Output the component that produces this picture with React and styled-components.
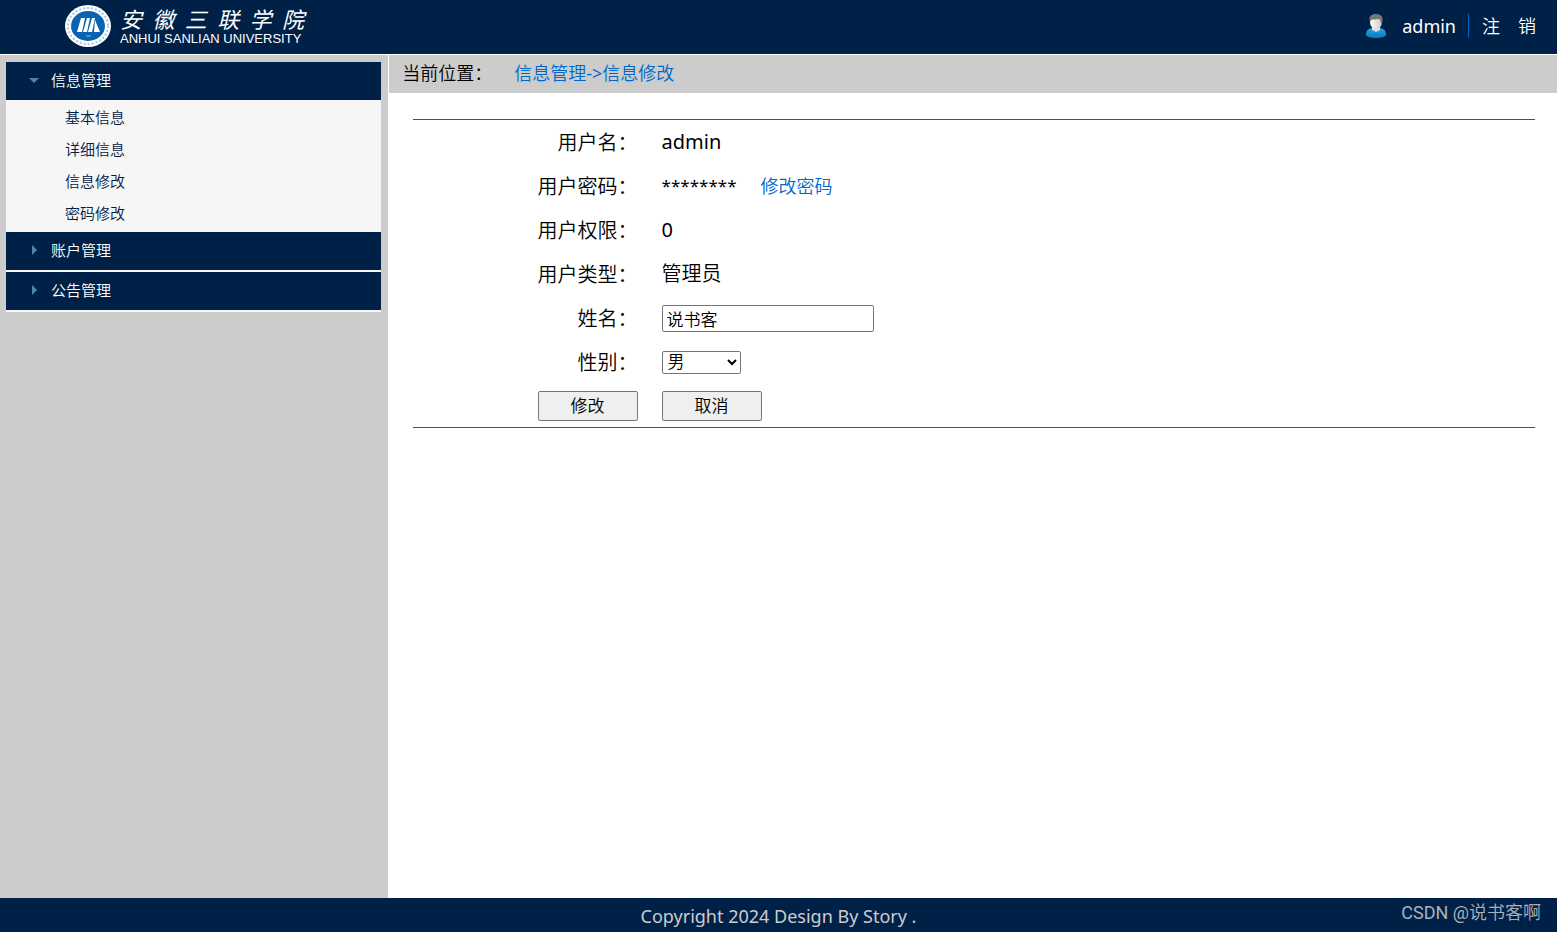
import React, { useState } from 'react';
import styled, { createGlobalStyle } from 'styled-components';

const GlobalStyle = createGlobalStyle`
  * {
    box-sizing: border-box;
  }

  body {
    margin: 0;
    background: #fff;
    color: #000;
    font-family: 'Noto Sans', 'Noto Sans CJK SC DemiLight', 'Noto Sans CJK SC Light', 'Noto Sans CJK SC', sans-serif;
    font-weight: 400;
  }

  a {
    color: #0066cc;
    text-decoration: none;
  }
`;

const MENUS = [
  { title: '信息管理', items: ['基本信息', '详细信息', '信息修改', '密码修改'] },
  { title: '账户管理', items: [] },
  { title: '公告管理', items: [] },
];

const Emblem = () => (
  <svg width='48' height='44' viewBox='0 0 48 44' aria-hidden='true'>
    <ellipse cx='24' cy='22' rx='23' ry='21' fill='#fff' />
    <ellipse cx='24' cy='22' rx='20' ry='18' fill='none' stroke='#a9c6e2' strokeWidth='2' strokeDasharray='2 2' />
    <ellipse cx='24' cy='22' rx='17' ry='15' fill='#0b62b0' />
    <path d='M17 14h4l-3 14h-5zM23 14h3l-3 14h-4zM28 14h3l-3 14h-4zM31 16l5 12h-6z' fill='#fff' />
    <path d='M22 32h5' stroke='#8fb6dc' />
  </svg>
);

const UserIcon = () => (
  <svg width='20' height='26' viewBox='0 0 20 26' aria-hidden='true'>
    <defs>
      <linearGradient id='shirt' x1='0' y1='0' x2='0' y2='1'>
        <stop offset='0' stopColor='#2ba4e0' />
        <stop offset='1' stopColor='#0a78bd' />
      </linearGradient>
      <linearGradient id='face' x1='0' y1='0' x2='1' y2='0'>
        <stop offset='0' stopColor='#fff' />
        <stop offset='1' stopColor='#c9c9c9' />
      </linearGradient>
    </defs>
    <path d='M0 22c0-5 3-7 7-7h6c4 0 7 2 7 7-1 4-19 4-20 0z' fill='url(#shirt)' />
    <path d='M6 12h8v5l-4 2-4-2z' fill='#ddd' />
    <ellipse cx='10' cy='9' rx='6' ry='7' fill='url(#face)' />
    <path d='M4 9C2 3 6 1 10 1c5 0 8 3 6 9l-1 1c0-3-1-5-3-5-3 1-5 0-7 1z' fill='#777' />
  </svg>
);

const App = () => {
  const [open, setOpen] = useState(0);
  const [name, setName] = useState('说书客');
  const [sex, setSex] = useState('男');

  return (
    <Page>
      <GlobalStyle />
      <Header>
        <Brand>
          <Emblem />
          <BrandText>
            <BrandName>
              {[...'安徽三联学院'].map((char) => (
                <span key={char}>{char}</span>
              ))}
            </BrandName>
            <BrandLatin>ANHUI SANLIAN UNIVERSITY</BrandLatin>
          </BrandText>
        </Brand>
        <Account>
          <UserIcon />
          <UserName>admin</UserName>
          <Logout href='#logout'>注　销</Logout>
        </Account>
      </Header>

      <Body>
        <Sidebar>
          {MENUS.map((menu, index) => (
            <MenuGroup key={menu.title}>
              <MenuTitle
                type='button'
                aria-expanded={open === index}
                onClick={() => setOpen(open === index ? -1 : index)}
              >
                <Arrow viewBox='0 0 10 10' $open={open === index} aria-hidden='true'>
                  <path d='M3 0l5 5-5 5z' />
                </Arrow>
                {menu.title}
              </MenuTitle>
              {open === index && menu.items.length > 0 && (
                <MenuList>
                  {menu.items.map((item) => (
                    <li key={item}>
                      <MenuLink href='#menu'>{item}</MenuLink>
                    </li>
                  ))}
                </MenuList>
              )}
            </MenuGroup>
          ))}
        </Sidebar>

        <Main>
          <Location>
            <span>当前位置：</span>
            <a href='#current'>信息管理-&gt;信息修改</a>
          </Location>
          <Form onSubmit={(e) => e.preventDefault()}>
            <Label as='span'>用户名：</Label>
            <Value>admin</Value>
            <Label as='span'>用户密码：</Label>
            <Value>
              <Mask>********</Mask>
              <PasswordLink href='#password'>修改密码</PasswordLink>
            </Value>
            <Label as='span'>用户权限：</Label>
            <Value>0</Value>
            <Label as='span'>用户类型：</Label>
            <Value>管理员</Value>
            <Label htmlFor='name'>姓名：</Label>
            <Value>
              <Input id='name' type='text' value={name} onChange={(e) => setName(e.target.value)} />
            </Value>
            <Label htmlFor='sex'>性别：</Label>
            <Value>
              <Select id='sex' value={sex} onChange={(e) => setSex(e.target.value)}>
                <option>男</option>
                <option>女</option>
              </Select>
            </Value>
            <Actions>
              <Button type='submit'>修改</Button>
            </Actions>
            <Value>
              <Button type='reset'>取消</Button>
            </Value>
          </Form>
        </Main>
      </Body>

      <Footer>
        Copyright 2024 Design By Story .
        <Watermark>CSDN @说书客啊</Watermark>
      </Footer>
    </Page>
  );
};

const Page = styled.div`
  display: flex;
  flex-direction: column;
  min-height: 100vh;
`;

const Header = styled.header`
  display: flex;
  justify-content: space-between;
  align-items: center;
  height: 54px;
  padding: 0 21px 2px 64px;
  background: #002147;
  color: #fff;
`;

const Brand = styled.div`
  display: flex;
  align-items: center;
  gap: 8px;
`;

const BrandText = styled.div`
  display: flex;
  flex-direction: column;
  gap: 1px;
  width: 184px;
`;

const BrandName = styled.div`
  display: flex;
  justify-content: space-between;
  font-family: 'Noto Sans CJK SC', sans-serif;
  font-size: 22px;
  font-style: italic;
  line-height: 24px;
`;

const BrandLatin = styled.div`
  font-family: 'Liberation Sans', Arial, sans-serif;
  font-size: 13px;
  line-height: 16px;
  white-space: nowrap;
`;

const Account = styled.div`
  display: flex;
  align-items: center;
  font-size: 18px;
  line-height: 24px;
`;

const UserName = styled.span`
  margin-left: 16px;
  padding-right: 12px;
  border-right: 1px solid #0066cc;
`;

const Logout = styled.a`
  margin-left: 13px;
  color: #fff;
`;

const Body = styled.div`
  display: flex;
  flex: 1;
  border-top: 1px solid #fff;
`;

const Sidebar = styled.nav`
  flex: 0 0 25%;
  padding: 7px 7px 0 6px;
  border-right: 1px solid #fff;
  background: #ccc;
`;

const MenuGroup = styled.div`
  border-bottom: 2px solid #f6f6f6;
`;

const MenuTitle = styled.button`
  display: flex;
  align-items: center;
  gap: 12px;
  width: 100%;
  height: 38px;
  padding: 0 23px 2px;
  border: 0;
  background: #002147;
  color: #fff;
  font-family: inherit;
  font-size: 15px;
  line-height: 36px;
  cursor: pointer;
`;

const Arrow = styled.svg`
  width: 10px;
  height: 10px;
  fill: #4c86a8;
  transform: ${({ $open }) => ($open ? 'rotate(90deg)' : 'none')};
`;

const MenuList = styled.ul`
  margin: 0;
  padding: 1px 0;
  list-style: none;
  background: #f6f6f6;
`;

const MenuLink = styled.a`
  display: block;
  padding-left: 59px;
  color: #002147;
  font-size: 15px;
  line-height: 32px;
`;

const Main = styled.main`
  flex: 1;
  min-width: 0;
`;

const Location = styled.div`
  display: flex;
  gap: 22px;
  height: 38px;
  padding-left: 13px;
  background: #ccc;
  font-size: 18px;
  line-height: 37px;
`;

const Form = styled.form`
  display: grid;
  grid-template-columns: 20% 1fr;
  grid-template-rows: repeat(6, 44px) 43px;
  margin: 26px 22px 0 24px;
  border-top: 1px solid #0066b3;
  border-bottom: 1px solid #0066b3;
  font-size: 20px;
  line-height: 44px;
`;

const Label = styled.label`
  line-height: 46px;
  text-align: right;
`;

const Value = styled.div`
  display: flex;
  align-items: center;
  padding-left: 24px;
`;

const Actions = styled.div`
  display: flex;
  align-items: center;
  justify-content: flex-end;
`;

const Mask = styled.span`
  font-size: 17px;
`;

const PasswordLink = styled.a`
  margin-left: 24px;
  font-size: 18px;
`;

const Input = styled.input`
  width: 212px;
  height: 27px;
  padding: 1px 4px;
  border: 1px solid #767676;
  border-radius: 2px;
  font-family: inherit;
  font-size: 17px;
`;

const Select = styled.select`
  width: 79px;
  height: 23px;
  padding: 0 3px 0 1px;
  border: 1px solid #767676;
  border-radius: 2px;
  background: #fff;
  font-family: 'Liberation Sans', 'Noto Sans CJK SC DemiLight', 'Noto Sans CJK SC Light', 'Noto Sans CJK SC', sans-serif;
  font-size: 17px;
  line-height: 20px;
`;

const Button = styled.button`
  width: 100px;
  height: 30px;
  padding: 0;
  border: 1px solid #767676;
  border-radius: 2px;
  background: #efefef;
  color: #000;
  font-family: inherit;
  font-size: 17px;
  line-height: 28px;
`;

const Footer = styled.footer`
  position: relative;
  height: 34px;
  background: #002147;
  color: #ccc;
  font-size: 18px;
  line-height: 36px;
  text-align: center;
`;

const Watermark = styled.span`
  position: absolute;
  top: 0;
  right: 16px;
  color: #a9b1bb;
  font-family: Roboto, 'Noto Sans CJK SC DemiLight', 'Noto Sans CJK SC', sans-serif;
  line-height: 30px;
`;

export default App;
